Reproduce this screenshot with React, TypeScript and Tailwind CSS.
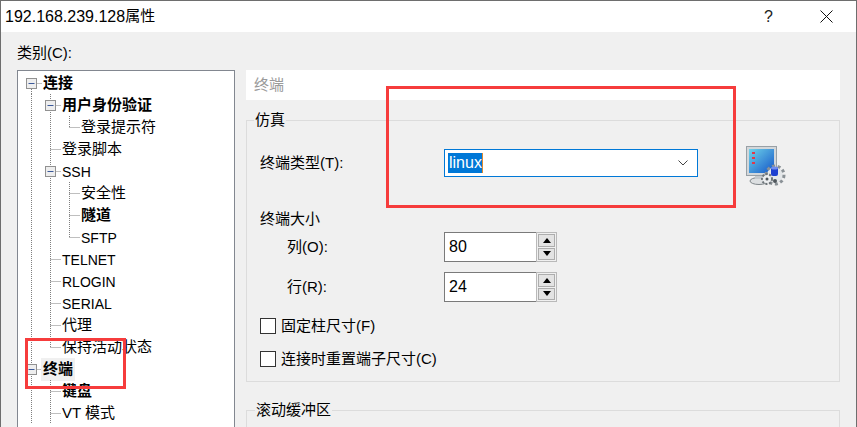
import React from 'react';

type Node = {
  label: string;
  level: number;
  bold?: boolean;
  box?: boolean;
  last?: boolean;
  selected?: boolean;
  latin?: boolean;
};

const tree: Node[] = [
  { label: '连接', level: 0, bold: true, box: true },
  { label: '用户身份验证', level: 1, bold: true, box: true },
  { label: '登录提示符', level: 2, last: true },
  { label: '登录脚本', level: 1 },
  { label: 'SSH', level: 1, box: true, latin: true },
  { label: '安全性', level: 2 },
  { label: '隧道', level: 2, bold: true },
  { label: 'SFTP', level: 2, last: true, latin: true },
  { label: 'TELNET', level: 1, latin: true },
  { label: 'RLOGIN', level: 1, latin: true },
  { label: 'SERIAL', level: 1, latin: true },
  { label: '代理', level: 1 },
  { label: '保持活动状态', level: 1, last: true },
  { label: '终端', level: 0, bold: true, box: true, selected: true },
  { label: '键盘', level: 1, bold: true },
  { label: 'VT 模式', level: 1 },
];

// dotted connectors and the +/- box for one row of the tree
function Connector({ node, first }: { node: Node; first: boolean }) {
  const w = 25 + node.level * 19;
  const cx = 13.5 + node.level * 19;
  const dots = '#7f7f7f';
  const guides = Array.from({ length: node.level }, (_, i) => i);
  return (
    <svg width={w} height={22} className="shrink-0">
      {guides.map((g) => {
        const x = 13.5 + g * 19;
        return <line key={g} x1={x} x2={x} y1={0} y2={22} stroke={dots} strokeDasharray="1 1" />;
      })}
      <line
        x1={cx}
        x2={cx}
        y1={first ? 11 : 0}
        y2={node.last ? 11.5 : 22}
        stroke={dots}
        strokeDasharray="1 1"
      />
      <line x1={cx} x2={w - 1} y1={11.5} y2={11.5} stroke={dots} strokeDasharray="1 1" />
      {node.box && (
        <g>
          <rect x={cx - 5} y={6.5} width={10} height={10} fill="#eeeeee" stroke="#919191" />
          <line x1={cx - 3} x2={cx + 3} y1={11.5} y2={11.5} stroke="#3c5a9a" />
        </g>
      )}
    </svg>
  );
}

function TreeRow({ node, first }: { node: Node; first: boolean }) {
  const size = node.latin ? 'pt-[2px] text-[14px]' : 'text-[15px]';
  return (
    <div className="flex h-[22px] items-center whitespace-nowrap">
      <Connector node={node} first={first} />
      <span
        className={`-ml-[2px] flex h-[23px] items-center px-[2px] text-black ${size} ${node.bold ? 'font-bold' : ''} ${node.selected ? 'bg-[#f0f0f0]' : ''}`}
      >
        {node.label}
      </span>
    </div>
  );
}

function Spinner({ value }: { value: string }) {
  return (
    <div className="flex h-[30px] w-[113px]">
      <div className="flex w-[92px] items-center border border-r-0 border-[#7a7a7a] bg-white pl-[4px] text-[16px] text-black">
        {value}
      </div>
      <div className="flex w-[21px] flex-col gap-[1px] border border-[#b9b9b9] bg-[#f0f0f0] p-[1px]">
        <div className="flex flex-1 items-center justify-center border border-[#adadad] bg-[#e3e3e3]">
          <svg width="8" height="5">
            <path d="M4 0 L8 5 L0 5 Z" fill="#000" />
          </svg>
        </div>
        <div className="flex flex-1 items-center justify-center border border-[#adadad] bg-[#e3e3e3]">
          <svg width="8" height="5">
            <path d="M0 0 L8 0 L4 5 Z" fill="#000" />
          </svg>
        </div>
      </div>
    </div>
  );
}

function Check({ label }: { label: string }) {
  return (
    <div className="flex h-[16px] items-center gap-[5px] text-[15px] text-black">
      <div className="h-[16px] w-[16px] border border-[#333333] bg-white" />
      <span>{label}</span>
    </div>
  );
}

function TerminalIcon() {
  return (
    <svg width="41" height="41" viewBox="0 0 41 41">
      <defs>
        <linearGradient id="screen" x1="0" y1="0" x2="1" y2="1">
          <stop offset="0" stopColor="#6fd3ea" />
          <stop offset="1" stopColor="#1456c8" />
        </linearGradient>
      </defs>
      {/* monitor */}
      <ellipse cx="13" cy="35" rx="9" ry="3.5" fill="#dcdfe1" stroke="#7f868a" />
      <rect x="9" y="28" width="9" height="5" fill="#c4c9cd" />
      <rect x="0.5" y="0.5" width="30" height="29" fill="#d3d7da" stroke="#98a0a6" />
      <rect x="3" y="3" width="25" height="24" fill="url(#screen)" />
      <rect x="6" y="6" width="3" height="2" fill="#e0394a" />
      <rect x="6" y="11" width="3" height="2" fill="#e0394a" />
      <rect x="6" y="16" width="3" height="2" fill="#e0394a" />
      {/* gears */}
      <circle cx="29" cy="29" r="8" fill="#e4e7e9" />
      <circle cx="29" cy="29" r="9" fill="none" stroke="#8a9196" strokeWidth="3" strokeDasharray="3 2.6" />
      <circle cx="21" cy="33" r="4" fill="#eceef0" />
      <circle cx="21" cy="33" r="5" fill="none" stroke="#6d7479" strokeWidth="2" strokeDasharray="2 1.6" />
      <circle cx="21" cy="33" r="1.5" fill="#4f565b" />
      <circle cx="29" cy="35" r="2" fill="#4f565b" />
      <rect x="25" y="21" width="7" height="9" rx="2" fill="#1c3fd0" />
      <ellipse cx="28.5" cy="22" rx="3.5" ry="1.6" fill="#6f8cf0" />
    </svg>
  );
}

export default function App() {
  return (
    <div className="relative h-[427px] w-[857px] overflow-hidden border-x border-t border-[#6e6e6e] bg-[#f0f0f0] font-['Liberation_Sans','Noto_Sans_CJK_SC',sans-serif] text-black">
      {/* title bar */}
      <div className="flex h-[31px] items-center bg-white pl-[4px] text-[15px]">
        <span className="text-[16px]">192.168.239.128</span>
        <span>属性</span>
        <div className="ml-auto flex items-center">
          <span className="mr-[47px] text-[16px] text-[#222]">?</span>
          <svg width="13" height="13" className="mr-[23px]">
            <path d="M0.5 0.5 L12.5 12.5 M12.5 0.5 L0.5 12.5" stroke="#111" />
          </svg>
        </div>
      </div>

      <div className="flex gap-[11px] pl-[16px] pt-[11px]">
        {/* category tree */}
        <div className="w-[218px] shrink-0">
          <div className="mb-[7px] h-[20px] text-[15px] leading-[20px]">类别(C):</div>
          <div className="h-[400px] border border-[#828790] bg-white pt-[1px]">
            {tree.map((node, i) => (
              <TreeRow key={node.label} node={node} first={i === 0} />
            ))}
          </div>
        </div>

        {/* settings */}
        <div className="w-[594px] shrink-0 pt-[27px]">
          <div className="flex h-[30px] items-center bg-white pl-[8px] text-[15px] text-[#9a9a9a]">终端</div>

          <fieldset className="mt-[10px] h-[272px] border border-[#dcdcdc]">
            <legend className="ml-[7px] px-[1px] text-[15px] leading-[20px]">仿真</legend>
            <div className="pl-[13px] pt-[18px]">
              <div className="flex h-[30px] items-center">
                <span className="w-[184px] text-[15px]">终端类型(T):</span>
                <div className="flex h-[28px] w-[254px] items-center border border-[#0078d7] bg-white pl-[3px] pr-[9px]">
                  <span className="flex h-[20px] items-center border-r border-[#e08a2c] bg-[#0078d7] pl-[1px] text-[16px] text-white">linux</span>
                  <svg width="10" height="6" className="ml-auto">
                    <path d="M0.5 0.5 L5 5 L9.5 0.5" fill="none" stroke="#444" />
                  </svg>
                </div>
                <div className="ml-[48px] mt-[6px]">
                  <TerminalIcon />
                </div>
              </div>

              <div className="mt-[31px] h-[20px] text-[15px] leading-[20px]">终端大小</div>
              <div className="mt-[3px] flex flex-col gap-[10px]">
                <div className="flex items-center">
                  <span className="w-[184px] pl-[27px] text-[15px]">列(O):</span>
                  <Spinner value="80" />
                </div>
                <div className="flex items-center">
                  <span className="w-[184px] pl-[27px] text-[15px]">行(R):</span>
                  <Spinner value="24" />
                </div>
              </div>
              <div className="mt-[16px] flex flex-col gap-[17px]">
                <Check label="固定柱尺寸(F)" />
                <Check label="连接时重置端子尺寸(C)" />
              </div>
            </div>
          </fieldset>

          <fieldset className="mt-[18px] h-[60px] border border-[#dcdcdc]">
            <legend className="ml-[8px] px-[1px] text-[15px] leading-[20px]">滚动缓冲区</legend>
          </fieldset>
        </div>
      </div>

      {/* red annotation boxes */}
      <div className="absolute left-[385px] top-[85px] h-[122px] w-[350px] border-[3px] border-[#f63c3c]" />
      <div className="absolute left-[24px] top-[337px] h-[51px] w-[101px] border-[3px] border-[#f63c3c]" />
    </div>
  );
}
